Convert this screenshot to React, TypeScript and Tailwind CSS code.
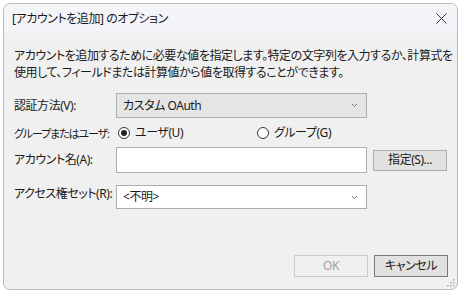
const font = "font-['Noto_Sans','Noto_Sans_CJK_JP',sans-serif] [font-feature-settings:'palt'] tracking-[-0.45px]";

function Chevron() {
  return (
    <svg width="7" height="5" viewBox="0 0 7 5" className="shrink-0">
      <path d="M1 1 L3.5 3.5 L6 1" fill="none" stroke="#7a7a7a" strokeWidth="1" />
    </svg>
  );
}

function Radio({ checked, label }: { checked?: boolean; label: string }) {
  return (
    <div className="flex items-center gap-[5px] whitespace-nowrap">
      <span className="w-[12px] h-[12px] rounded-full border border-[#333] bg-white flex items-center justify-center">
        {checked && <span className="w-[6px] h-[6px] rounded-full bg-[#222]" />}
      </span>
      <span>{label}</span>
    </div>
  );
}

export default function App() {
  return (
    <div className={`w-[462px] h-[293px] bg-white pt-[3px] pl-[3px] pr-[4px] pb-[3px] text-[12px] text-[#1a1a1a] leading-none ${font}`}>
      <div className="h-full rounded-[7px] border border-[#b9b9b9] bg-[#f0f0f0] flex flex-col overflow-hidden relative">
        <div className="h-[29px] bg-[#f3f5f9] flex items-center justify-between pl-[8px] pr-[10px] shrink-0">
          <span className="text-[12px] text-[#1a1a1a] whitespace-nowrap">[アカウントを追加] のオプション</span>
          <svg width="11" height="11" viewBox="0 0 11 11">
            <path d="M0.5 0.5 L10.5 10.5 M10.5 0.5 L0.5 10.5" stroke="#333" strokeWidth="1" />
          </svg>
        </div>

        <div className="flex-1 flex flex-col pl-[10px] pr-[9px]">
          <p className="mt-[14px] leading-[17px] whitespace-nowrap">
            アカウントを追加するために必要な値を指定します。特定の文字列を入力するか、計算式を
            <br />
            使用して、フィールドまたは計算値から値を取得することができます。
          </p>

          <div className="mt-[12px] flex items-center whitespace-nowrap">
            <span className="w-[102px]">認証方法(V):</span>
            <div className="w-[251px] h-[25px] bg-[#e5e5e5] border border-[#adadad] flex items-center justify-between pl-[6px] pr-[8px]">
              <span>カスタム OAuth</span>
              <Chevron />
            </div>
          </div>

          <div className="mt-[7px] flex items-center h-[16px] whitespace-nowrap">
            <span className="w-[104px] shrink-0 text-[11px] tracking-[-1.1px]">グループまたはユーザ:</span>
            <div className="w-[139px]">
              <Radio checked label="ユーザ(U)" />
            </div>
            <Radio label="グループ(G)" />
          </div>

          <div className="mt-[6px] flex items-center whitespace-nowrap">
            <span className="w-[102px]">アカウント名(A):</span>
            <div className="w-[251px] h-[26px] bg-white border border-[#7a7a7a]/60" />
            <div className="ml-[6px] w-[74px] h-[21px] bg-[#e1e1e1] border border-[#adadad] flex items-center justify-center">
              指定(S)...
            </div>
          </div>

          <div className="mt-[12px] flex items-center whitespace-nowrap">
            <span className="w-[102px] -mt-[6px]">アクセス権セット(R):</span>
            <div className="w-[251px] h-[24px] bg-white border border-[#adadad] flex items-center justify-between pl-[6px] pr-[8px]">
              <span>&lt;不明&gt;</span>
              <Chevron />
            </div>
          </div>

          <div className="mt-auto mb-[12px] flex justify-end gap-[6px]">
            <div className="w-[74px] h-[22px] border border-[#cccccc] bg-[#f0f0f0] text-[#a0a0a0] flex items-center justify-center">
              OK
            </div>
            <div className="w-[74px] h-[22px] border border-[#7a7a7a] bg-[#e1e1e1] flex items-center justify-center">
              キャンセル
            </div>
          </div>
        </div>

        <svg width="9" height="9" viewBox="0 0 9 9" className="absolute right-[2px] bottom-[2px]">
          {[
            [7, 1], [7, 4], [4, 4], [7, 7], [4, 7], [1, 7],
          ].map(([x, y], i) => (
            <rect key={i} x={x} y={y} width="1.5" height="1.5" fill="#b0b0b0" />
          ))}
        </svg>
      </div>
    </div>
  );
}
